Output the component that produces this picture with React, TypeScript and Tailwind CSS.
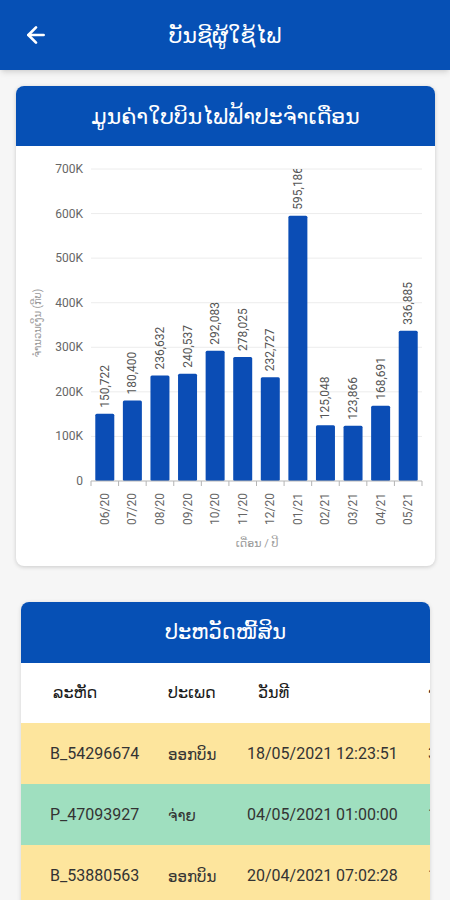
import { ArrowLeft } from "lucide-react";

const months = [
    { label: "06/20", value: 150722 },
    { label: "07/20", value: 180400 },
    { label: "08/20", value: 236632 },
    { label: "09/20", value: 240537 },
    { label: "10/20", value: 292083 },
    { label: "11/20", value: 278025 },
    { label: "12/20", value: 232727 },
    { label: "01/21", value: 595186 },
    { label: "02/21", value: 125048 },
    { label: "03/21", value: 123866 },
    { label: "04/21", value: 168691 },
    { label: "05/21", value: 336885 },
];

const records = [
    { code: "B_54296674", type: "ອອກບິນ", date: "18/05/2021 12:23:51", amount: "336,885", paid: false },
    { code: "P_47093927", type: "ຈ່າຍ", date: "04/05/2021 01:00:00", amount: "168,691", paid: true },
    { code: "B_53880563", type: "ອອກບິນ", date: "20/04/2021 07:02:28", amount: "168,691", paid: false },
    { code: "P_46120385", type: "ຈ່າຍ", date: "05/04/2021 09:14:10", amount: "123,866", paid: true },
];

const FONT = "Roboto, 'DejaVu Sans', sans-serif";

// plot geometry (px inside the card body)
const X0 = 75;
const X1 = 406;
const BASE = 335;
const TOP = 23;
const MAX = 700000;
const BAND = (X1 - X0) / 12;

function BillChart() {
    const ticks = [0, 100, 200, 300, 400, 500, 600, 700];
    const y = (v: number) => BASE - (v / MAX) * (BASE - TOP);

    return (
        <svg width="419" height="420" viewBox="0 0 419 420" style={{ fontFamily: FONT }}>
            <defs>
                <clipPath id="plot">
                    <rect x="0" y={TOP} width="419" height={BASE - TOP + 80} />
                </clipPath>
            </defs>
            {ticks.slice(1).map((t) => (
                <line key={t} x1={X0} x2={X1} y1={y(t * 1000)} y2={y(t * 1000)} stroke="#ececec" strokeWidth="1" />
            ))}
            {ticks.map((t) => (
                <text
                    key={t}
                    x="67"
                    y={y(t * 1000)}
                    textAnchor="end"
                    dominantBaseline="central"
                    fontSize="12"
                    fill="#666"
                >
                    {t === 0 ? "0" : `${t}K`}
                </text>
            ))}
            <g clipPath="url(#plot)">
                {months.map((m, i) => {
                    const cx = X0 + BAND * i + BAND / 2;
                    const top = y(m.value);
                    return (
                        <g key={m.label}>
                            <rect x={cx - 9.5} y={top} width="19" height={BASE - top} fill="#0b4db5" rx="1.5" />
                            <text
                                transform={`translate(${cx} ${top - 6}) rotate(-90)`}
                                dominantBaseline="central"
                                fontSize="12"
                                fill="#555"
                            >
                                {m.value.toLocaleString("en-US")}
                            </text>
                        </g>
                    );
                })}
            </g>
            <line x1={X0} x2={X1} y1={BASE} y2={BASE} stroke="#b5b5b5" strokeWidth="1" />
            {Array.from({ length: 13 }).map((_, i) => (
                <line
                    key={i}
                    x1={X0 + BAND * i}
                    x2={X0 + BAND * i}
                    y1={BASE}
                    y2={BASE + 5}
                    stroke="#b5b5b5"
                    strokeWidth="1"
                />
            ))}
            {months.map((m, i) => (
                <text
                    key={m.label}
                    transform={`translate(${X0 + BAND * i + BAND / 2} 347) rotate(-90)`}
                    textAnchor="end"
                    dominantBaseline="central"
                    fontSize="12"
                    fill="#666"
                >
                    {m.label}
                </text>
            ))}
            <text
                transform="translate(21 177) rotate(-90)"
                textAnchor="middle"
                dominantBaseline="central"
                fontSize="10"
                fill="#9a9a9a"
            >
                ຈຳນວນເງິນ (ກີບ)
            </text>
            <text x="241" y="397" textAnchor="middle" dominantBaseline="central" fontSize="11" fill="#9a9a9a">
                ເດືອນ / ປີ
            </text>
        </svg>
    );
}

export default function App() {
    return (
        <div className="min-h-[900px] bg-[#f6f6f6] text-[#222]" style={{ fontFamily: FONT }}>
            <header className="relative flex h-[70px] items-center justify-center bg-[#0650b5] shadow-md">
                <ArrowLeft className="absolute left-[23px] h-[26px] w-[26px] text-white" strokeWidth={2.5} />
                <h1 className="text-[22px] font-medium text-white">ບັນຊີຜູ້ໃຊ້ໄຟ</h1>
            </header>

            <section className="mx-[15px] ml-[16px] mt-[16px] overflow-hidden rounded-lg bg-white shadow-[0_1px_4px_rgba(0,0,0,0.18)]">
                <div className="flex h-[60px] items-center justify-center bg-[#0650b5]">
                    <h2 className="text-[22px] font-medium text-white">ມູນຄ່າໃບບິນໄຟຟ້າປະຈຳເດືອນ</h2>
                </div>
                <BillChart />
            </section>

            <section className="ml-[21px] mr-[20px] mt-[36px] overflow-hidden rounded-t-lg bg-white shadow-[0_1px_4px_rgba(0,0,0,0.15)]">
                <div className="flex h-[61px] items-center justify-center bg-[#0650b5]">
                    <h2 className="text-[21px] font-medium text-white">ປະຫວັດໜີ້ສິນ</h2>
                </div>
                <div className="w-[560px] text-[16px]">
                    <div className="grid h-[60px] grid-cols-[118px_79px_181px_150px] items-center pl-[29px] text-[#1a1a1a]">
                        <span className="pl-[3px]">ລະຫັດ</span>
                        <span>ປະເພດ</span>
                        <span className="pl-[11px]">ວັນທີ</span>
                        <span>ຈຳນວນເງິນ</span>
                    </div>
                    {records.map((r) => (
                        <div
                            key={r.code}
                            className={`grid h-[61px] grid-cols-[118px_79px_181px_150px] items-center pl-[29px] text-[#333] ${
                                r.paid ? "bg-[#9fdfbf]" : "bg-[#fde59d]"
                            }`}
                        >
                            <span>{r.code}</span>
                            <span className="pt-[3px] text-[15px]">{r.type}</span>
                            <span>{r.date}</span>
                            <span>{r.amount}</span>
                        </div>
                    ))}
                </div>
            </section>
        </div>
    );
}
